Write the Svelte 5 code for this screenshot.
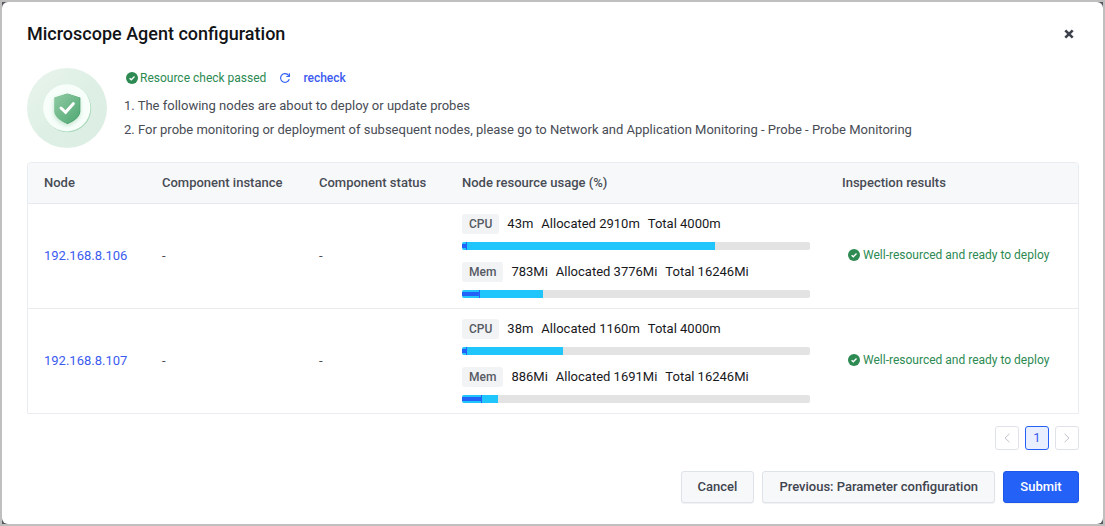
<script lang="ts">
  type Usage = {
    name: string;
    unit: string;
    used: number;
    allocated: number;
    total: number;
  };

  type NodeInfo = {
    ip: string;
    instance: string;
    status: string;
    usage: Usage[];
    result: string;
  };

  const nodes: NodeInfo[] = [
    {
      ip: '192.168.8.106',
      instance: '-',
      status: '-',
      usage: [
        { name: 'CPU', unit: 'm', used: 43, allocated: 2910, total: 4000 },
        { name: 'Mem', unit: 'Mi', used: 783, allocated: 3776, total: 16246 },
      ],
      result: 'Well-resourced and ready to deploy',
    },
    {
      ip: '192.168.8.107',
      instance: '-',
      status: '-',
      usage: [
        { name: 'CPU', unit: 'm', used: 38, allocated: 1160, total: 4000 },
        { name: 'Mem', unit: 'Mi', used: 886, allocated: 1691, total: 16246 },
      ],
      result: 'Well-resourced and ready to deploy',
    },
  ];

  const percent = (value: number, total: number) => (value / total) * 100;
</script>

{#snippet passedIcon()}
  <svg class="passed-icon" viewBox="0 0 12 12" aria-hidden="true">
    <circle cx="6" cy="6" r="6" fill="#2c8a52" />
    <path d="M3.6 6.2 5.3 7.8 8.5 4.6" fill="none" stroke="#fff" stroke-width="1.4" />
  </svg>
{/snippet}

<div class="dialog" role="dialog" aria-labelledby="title">
  <header>
    <h1 id="title">Microscope Agent configuration</h1>
    <button class="close" aria-label="Close">
      <svg width="10" height="10" viewBox="0 0 10 10">
        <path d="M1.300 1.300 8.700 8.700M8.700 1.300 1.300 8.700" stroke="#3d424d" stroke-width="2.600" />
      </svg>
    </button>
  </header>

  <section class="summary">
    <svg class="shield" viewBox="0 0 80 80" aria-hidden="true">
      <defs>
        <linearGradient id="disc" x1="0" y1="0" x2="1" y2="1">
          <stop offset="0" stop-color="#e9f4ed" />
          <stop offset="0.5" stop-color="#def0e5" />
          <stop offset="1" stop-color="#dceee3" />
        </linearGradient>
        <linearGradient id="body" x1="0" y1="0" x2="1" y2="1">
          <stop offset="0" stop-color="#8fcaa3" />
          <stop offset="1" stop-color="#50a873" />
        </linearGradient>
        <filter id="shadow" x="-40%" y="-40%" width="180%" height="180%">
          <feDropShadow dx="0" dy="2" stdDeviation="2.5" flood-color="#5fae7c" flood-opacity="0.4" />
        </filter>
      </defs>
      <circle cx="40" cy="40" r="40" fill="url(#disc)" />
      <circle cx="40.6" cy="40.6" r="23.6" fill="#a9d9ba" />
      <circle cx="39.8" cy="39.8" r="23.6" fill="#f8fffb" />
      <path
        d="M40.600 25.800 53.300 29.800V43.300C53.300 48.800 47.600 52.800 40.600 56.100 33.600 52.800 28 48.800 28 43.300V29.800Z"
        fill="#2f8f57"
      />
      <path
        d="M40 25.500 52.800 29.500V43C52.800 48.500 47 52.500 40 55.600 33 52.500 27.200 48.500 27.200 43V29.500Z"
        fill="url(#body)"
        filter="url(#shadow)"
      />
      <path d="M34 40 38.600 44.300 46.300 35.700" fill="none" stroke="#fff" stroke-width="3" stroke-linecap="round" />
    </svg>
    <div class="summary-text">
      <div class="check">
        <span class="passed">{@render passedIcon()}Resource check passed</span>
        <button class="recheck">
          <svg width="10" height="10" viewBox="0 0 10 10" fill="none" stroke="#3b66f5" stroke-width="1.200">
            <path d="M9.200 6.300A4.400 4.400 0 1 1 8.500 2.300L9.300 3.200" />
            <path d="M9.400 0.300V3.500H6.300" />
          </svg>
          recheck
        </button>
      </div>
      <p>1. The following nodes are about to deploy or update probes</p>
      <p>2. For probe monitoring or deployment of subsequent nodes, please go to Network and Application Monitoring - Probe - Probe Monitoring</p>
    </div>
  </section>

  <div class="table-wrap">
    <table>
      <thead>
        <tr>
          <th class="col-node">Node</th>
          <th class="col-instance">Component instance</th>
          <th class="col-status">Component status</th>
          <th>Node resource usage (%)</th>
          <th class="col-result">Inspection results</th>
        </tr>
      </thead>
      <tbody>
        {#each nodes as node}
          <tr>
            <td><a href="#{node.ip}">{node.ip}</a></td>
            <td>{node.instance}</td>
            <td>{node.status}</td>
            <td>
              <div class="usages">
                {#each node.usage as item}
                  <div class="usage">
                    <div class="usage-info">
                      <span class="tag">{item.name}</span>
                      <span>{item.used}{item.unit}</span>
                      <span>Allocated {item.allocated}{item.unit}</span>
                      <span>Total {item.total}{item.unit}</span>
                    </div>
                    <div class="bar">
                      <div class="bar-allocated" style="width: {percent(item.allocated, item.total)}%"></div>
                      <div class="bar-used" style="width: {percent(item.used, item.total)}%"></div>
                    </div>
                  </div>
                {/each}
              </div>
            </td>
            <td class="result"><span class="passed">{@render passedIcon()}{node.result}</span></td>
          </tr>
        {/each}
      </tbody>
    </table>
  </div>

  <nav class="pagination" aria-label="Pagination">
    <button class="page" disabled aria-label="Previous page">
      <svg width="8" height="10" viewBox="0 0 8 10"><path d="M6.500 0.800 2 5 6.500 9.200" /></svg>
    </button>
    <button class="page active" aria-current="page">1</button>
    <button class="page" disabled aria-label="Next page">
      <svg width="8" height="10" viewBox="0 0 8 10"><path d="M1.500 0.800 6 5 1.500 9.200" /></svg>
    </button>
  </nav>

  <footer>
    <button class="btn">Cancel</button>
    <button class="btn">Previous: Parameter configuration</button>
    <button class="btn primary">Submit</button>
  </footer>
</div>

<style>
  :global(body) {
    background-color: #55585d;
    border: 2px solid #bfbfbf;
  }

  .dialog {
    background-color: #fff;
    border-radius: 6px;
    padding: 20px 24px 21px 25px;
    font-family: Roboto, "Liberation Sans", sans-serif;
    font-size: 13px;
    line-height: 20px;
    color: #484c55;
  }

  button {
    font: inherit;
    cursor: pointer;
  }

  header {
    display: flex;
    align-items: center;
    justify-content: space-between;
    height: 24px;
  }

  h1 {
    margin: 0;
    font-size: 18px;
    font-weight: 500;
    line-height: 24px;
    color: #121317;
  }

  .close {
    display: flex;
    padding: 5px;
    border: none;
    background: none;
  }

  .summary {
    display: flex;
    gap: 17px;
    margin-top: 22px;
  }

  .shield {
    width: 80px;
    height: 80px;
    flex: none;
  }

  .check {
    display: flex;
    align-items: center;
    gap: 14px;
    height: 20px;
    padding-left: 2px;
    margin-bottom: 6px;
  }

  .passed {
    display: inline-flex;
    align-items: center;
    gap: 3px;
    font-size: 12px;
    color: #2c8a52;
  }

  .check .passed {
    gap: 2px;
  }

  .passed-icon {
    width: 12px;
    height: 12px;
  }

  .recheck {
    display: inline-flex;
    align-items: center;
    gap: 13px;
    padding: 0;
    border: none;
    background: none;
    font-size: 12px;
    font-weight: 500;
    color: #3b5bf0;
  }

  p {
    margin: 0;
    line-height: 24px;
  }

  .table-wrap {
    margin-top: 14px;
    border: 1px solid #e9ecf1;
    border-radius: 4px 4px 0 0;
    overflow: hidden;
  }

  table {
    width: 100%;
    table-layout: fixed;
    border-collapse: separate;
    border-spacing: 0;
  }

  th,
  td {
    padding: 10px 16px;
    text-align: left;
    border-bottom: 1px solid #ebebee;
  }

  th {
    background-color: #f7f8fa;
    border-color: #e6e9ef;
    font-weight: 500;
  }

  tbody tr:last-child td {
    border-bottom: none;
  }

  .col-node {
    width: 86px;
  }

  .col-instance {
    width: 125px;
  }

  .col-status {
    width: 111px;
  }

  .col-result {
    width: 220px;
  }

  td a {
    color: #3b5bf0;
    text-decoration: none;
  }

  .usages {
    display: flex;
    flex-direction: column;
    gap: 12px;
  }

  .usage-info {
    display: flex;
    gap: 8px;
    color: #17181c;
  }

  .tag {
    padding: 0 7px;
    border-radius: 3px;
    background-color: #f2f3f5;
    font-size: 12px;
    font-weight: 500;
    color: #565a63;
  }

  .bar {
    display: grid;
    align-items: center;
    height: 8px;
    margin-top: 8px;
    border-radius: 2px;
    background-color: #e3e3e3;
    overflow: hidden;
  }

  .bar-allocated,
  .bar-used {
    grid-area: 1 / 1;
    height: 8px;
  }

  .bar-allocated {
    background-color: #20c5fb;
  }

  .bar-used {
    min-width: 4px;
    border-right: 1px solid #2461f6;
    background: linear-gradient(#2461f6, #2461f6) center / 100% 4px no-repeat;
  }

  .result {
    padding-left: 22px;
  }

  .pagination {
    display: flex;
    justify-content: flex-end;
    gap: 6px;
    margin-top: 12px;
  }

  .page {
    display: flex;
    align-items: center;
    justify-content: center;
    width: 24px;
    height: 24px;
    padding: 0;
    border: 1px solid #dfe2e8;
    border-radius: 3px;
    background-color: #fff;
    color: #3b5bf0;
  }

  .page.active {
    border-color: #2461f6;
    background-color: #e9effe;
  }

  .page path {
    fill: none;
    stroke: #c0c4cc;
  }

  footer {
    display: flex;
    justify-content: flex-end;
    gap: 8px;
    margin-top: 21px;
  }

  .btn {
    height: 32px;
    padding: 0 16px;
    border: 1px solid #dee2e9;
    border-radius: 3px;
    background-color: #f7f8fa;
    box-shadow: 0 1px 1px rgba(0, 0, 0, 0.06);
    font-weight: 500;
    color: #40444e;
  }

  .btn.primary {
    min-width: 76px;
    border-color: #1d57ea;
    background-color: #2461f6;
    color: #fff;
  }
</style>
